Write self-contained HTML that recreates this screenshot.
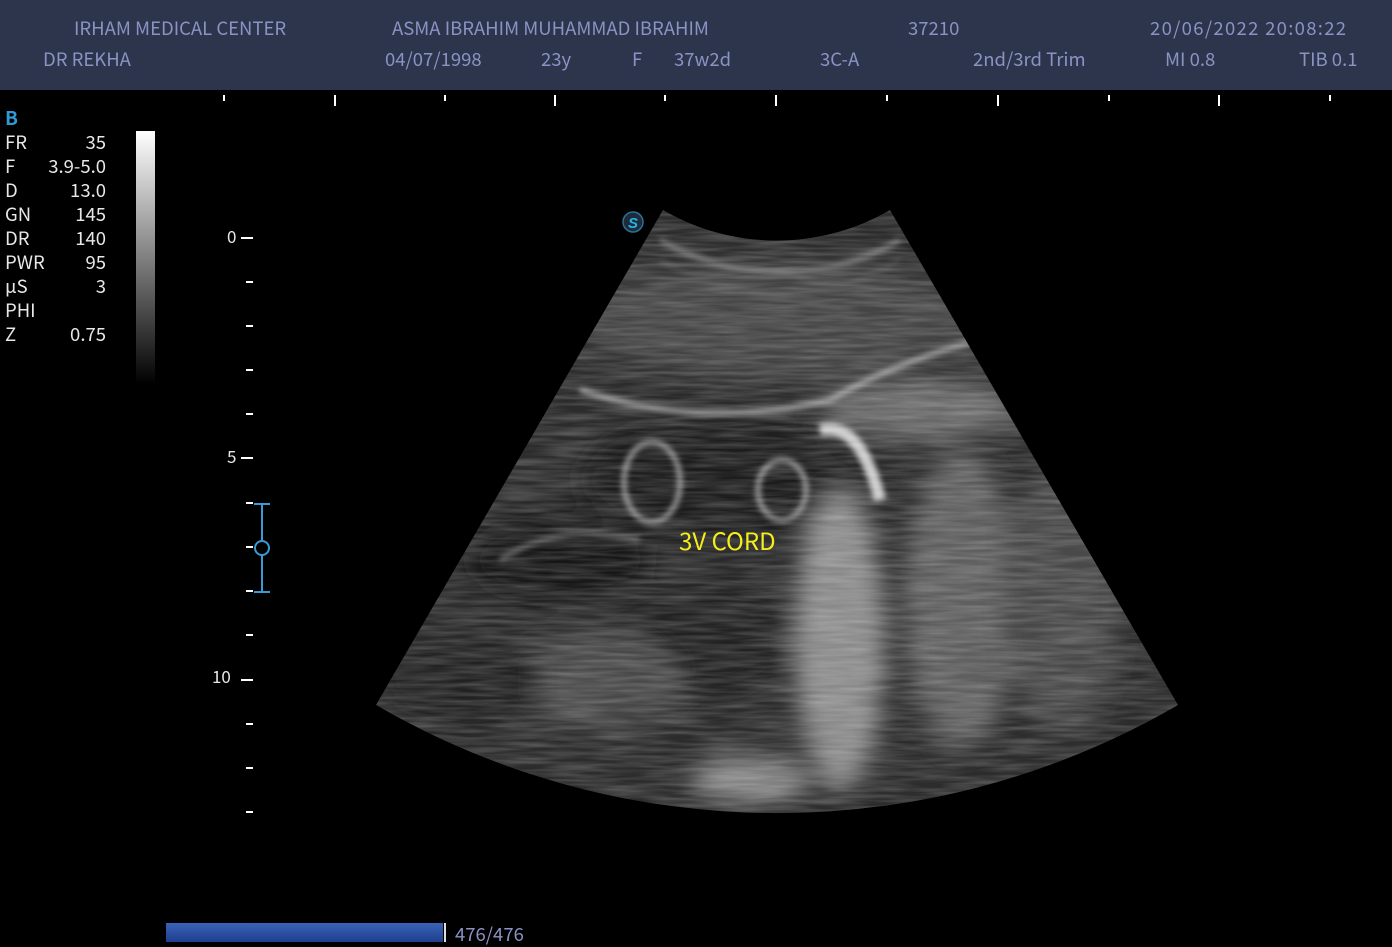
<!DOCTYPE html>
<html><head><meta charset="utf-8"><style>
body{margin:0;width:1392px;height:944px;background:#000;overflow:hidden;position:relative;font-family:"Noto Sans CJK JP","DejaVu Sans",sans-serif;}
.hdr{position:absolute;left:0;top:0;width:1392px;height:90px;background:#2d354c;}
.t{position:absolute;color:#8a93c4;font-size:18.5px;white-space:nowrap;line-height:20px;}
.w{position:absolute;color:#e8e8e8;font-size:18.5px;line-height:20px;white-space:nowrap;}
.tk{position:absolute;background:#fff;}
</style></head><body>
<div class="hdr"></div>
<div class="t" style="left:74px;top:18px">IRHAM MEDICAL CENTER</div>
<div class="t" style="left:392px;top:18px">ASMA IBRAHIM MUHAMMAD IBRAHIM</div>
<div class="t" style="left:908px;top:18px">37210</div>
<div class="t" style="left:1150px;top:18px;letter-spacing:1.3px">20/06/2022 20:08:22</div>
<div class="t" style="left:43px;top:49px">DR REKHA</div>
<div class="t" style="left:385px;top:49px">04/07/1998</div>
<div class="t" style="left:541px;top:49px">23y</div>
<div class="t" style="left:632px;top:49px">F</div>
<div class="t" style="left:674px;top:49px">37w2d</div>
<div class="t" style="left:820px;top:49px">3C-A</div>
<div class="t" style="left:973px;top:49px">2nd/3rd Trim</div>
<div class="t" style="left:1165px;top:49px">MI 0.8</div>
<div class="t" style="left:1299px;top:49px">TIB 0.1</div>

<div class="tk" style="left:223px;top:95px;width:2px;height:6px"></div>
<div class="tk" style="left:334px;top:95px;width:2px;height:11px"></div>
<div class="tk" style="left:444px;top:95px;width:2px;height:6px"></div>
<div class="tk" style="left:554px;top:95px;width:2px;height:11px"></div>
<div class="tk" style="left:664px;top:95px;width:2px;height:6px"></div>
<div class="tk" style="left:775px;top:95px;width:2px;height:11px"></div>
<div class="tk" style="left:886px;top:95px;width:2px;height:6px"></div>
<div class="tk" style="left:997px;top:95px;width:2px;height:11px"></div>
<div class="tk" style="left:1108px;top:95px;width:2px;height:6px"></div>
<div class="tk" style="left:1218px;top:95px;width:2px;height:11px"></div>
<div class="tk" style="left:1329px;top:95px;width:2px;height:6px"></div>

<div class="w" style="left:5px;top:108px;color:#2f9bd6;font-weight:bold;font-size:19px">B</div>
<div class="w" style="left:5px;top:132px">FR</div><div class="w" style="left:40px;top:132px;width:66px;text-align:right">35</div>
<div class="w" style="left:5px;top:156px">F</div><div class="w" style="left:30px;top:156px;width:76px;text-align:right">3.9-5.0</div>
<div class="w" style="left:5px;top:180px">D</div><div class="w" style="left:40px;top:180px;width:66px;text-align:right">13.0</div>
<div class="w" style="left:5px;top:204px">GN</div><div class="w" style="left:40px;top:204px;width:66px;text-align:right">145</div>
<div class="w" style="left:5px;top:228px">DR</div><div class="w" style="left:40px;top:228px;width:66px;text-align:right">140</div>
<div class="w" style="left:5px;top:252px">PWR</div><div class="w" style="left:50px;top:252px;width:56px;text-align:right">95</div>
<div class="w" style="left:5px;top:276px">µS</div><div class="w" style="left:50px;top:276px;width:56px;text-align:right">3</div>
<div class="w" style="left:5px;top:300px">PHI</div>
<div class="w" style="left:5px;top:324px">Z</div><div class="w" style="left:40px;top:324px;width:66px;text-align:right">0.75</div>
<div style="position:absolute;left:136px;top:131px;width:19px;height:254px;background:linear-gradient(#fff,#000)"></div>

<div class="w" style="left:227px;top:226px;font-size:17px">0</div>
<div class="w" style="left:227px;top:446px;font-size:17px">5</div>
<div class="w" style="left:212px;top:666px;font-size:17px">10</div>
<svg width="1392" height="944" style="position:absolute;left:0;top:0">
<defs>
<clipPath id="sec"><path d="M663,210 A226,226 0 0 0 890,210 L1178,705 A798,798 0 0 1 376,705 Z"/></clipPath>
<filter id="b"><feGaussianBlur stdDeviation="12"/></filter>
<filter id="b2"><feGaussianBlur stdDeviation="3"/></filter>
<filter id="n"><feTurbulence type="fractalNoise" baseFrequency="0.02 0.25" numOctaves="2" seed="3"/><feColorMatrix type="matrix" values="0 0 0 0 1 0 0 0 0 1 0 0 0 0 1 0 0 0 0.35 -0.1"/></filter>
</defs>
<g fill="#fff">
<rect x="241" y="237" width="12" height="2"/><rect x="246" y="281" width="7" height="2"/><rect x="246" y="325" width="7" height="2"/><rect x="246" y="369" width="7" height="2"/><rect x="246" y="413" width="7" height="2"/>
<rect x="241" y="457" width="12" height="2"/><rect x="246" y="502" width="7" height="2"/><rect x="246" y="546" width="7" height="2"/><rect x="246" y="590" width="7" height="2"/><rect x="246" y="634" width="7" height="2"/>
<rect x="241" y="679" width="12" height="2"/><rect x="246" y="723" width="7" height="2"/><rect x="246" y="767" width="7" height="2"/><rect x="246" y="811" width="7" height="2"/>
</g>
<g stroke="#3a9ad8" stroke-width="2" fill="none">
<line x1="262" y1="504" x2="262" y2="540"/><line x1="262" y1="555" x2="262" y2="592"/>
<line x1="254" y1="504" x2="270" y2="504"/><line x1="254" y1="592" x2="270" y2="592"/>
<circle cx="262" cy="548" r="7"/>
</g>
<g clip-path="url(#sec)">
<rect x="370" y="200" width="820" height="620" fill="#2c2c2c"/>
<g filter="url(#b)">
<ellipse cx="776" cy="320" rx="200" ry="60" fill="#444"/>
<ellipse cx="720" cy="480" rx="140" ry="60" fill="#1a1a1a"/>
<ellipse cx="560" cy="560" rx="90" ry="40" fill="#151515"/>
<ellipse cx="700" cy="640" rx="90" ry="50" fill="#202020"/>
<ellipse cx="840" cy="640" rx="45" ry="150" fill="#8a8a8a"/>
<ellipse cx="960" cy="600" rx="55" ry="150" fill="#5e5e5e"/>
<ellipse cx="1060" cy="600" rx="60" ry="130" fill="#484848"/>
<ellipse cx="600" cy="680" rx="80" ry="50" fill="#4a4a4a"/>
<ellipse cx="750" cy="780" rx="60" ry="22" fill="#8a8a8a"/>
<ellipse cx="920" cy="410" rx="100" ry="30" fill="#6a6a6a"/>
<ellipse cx="460" cy="680" rx="80" ry="40" fill="#222"/>
</g>
<g filter="url(#b2)" stroke="#aaa" stroke-width="5" fill="none">
<path d="M660,240 A240,240 0 0 0 900,240" stroke="#777"/>
<path d="M660,260 A240,240 0 0 0 900,260" stroke="#5a5a5a" stroke-width="3"/>
<path d="M580,390 Q700,430 830,400 Q900,360 980,340"/>
<ellipse cx="652" cy="482" rx="28" ry="40" stroke="#999"/>
<ellipse cx="782" cy="490" rx="24" ry="30" stroke="#999"/>
<path d="M820,430 Q860,420 880,500" stroke="#ccc" stroke-width="12"/>
<path d="M500,560 Q560,520 640,540" stroke="#666"/>
</g>
<rect x="370" y="200" width="820" height="620" filter="url(#n)"/>
</g>
<circle cx="633" cy="222" r="10" fill="#1d2b3c" stroke="#2f6f8f" stroke-width="1.5"/>
<text x="633" y="228" text-anchor="middle" fill="#2ab3e0" font-family="Liberation Sans" font-weight="bold" font-style="italic" font-size="15">S</text>
</svg>
<div class="w" style="left:679px;top:527px;color:#f5ee1a;font-size:24px;line-height:26px">3V CORD</div>
<div style="position:absolute;left:166px;top:923px;width:277px;height:19px;background:linear-gradient(#3b62b8,#1e3f8e)"></div>
<div style="position:absolute;left:444px;top:923px;width:2px;height:19px;background:#ddd"></div>
<div class="t" style="left:455px;top:924px">476/476</div>
</body></html>
